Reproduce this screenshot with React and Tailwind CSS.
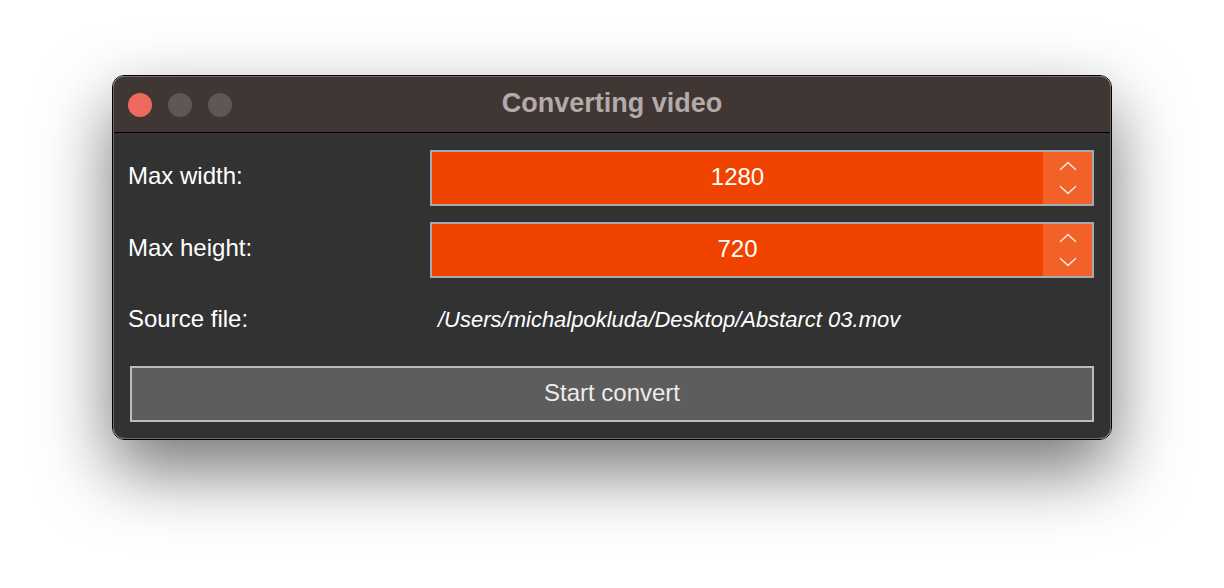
import React from "react";

function Chevron({ up }) {
  return (
    <svg width="18" height="10" viewBox="0 0 18 10" fill="none">
      <path
        d={up ? "M1.5 8.5 L9 1.5 L16.5 8.5" : "M1.5 1.5 L9 8.5 L16.5 1.5"}
        stroke="#fde9df"
        strokeWidth="1.5"
        strokeLinecap="round"
        strokeLinejoin="round"
      />
    </svg>
  );
}

function NumberField({ value }) {
  return (
    <div className="flex h-[56px] border-2 border-[#a5a8b5] bg-[#f04300]">
      <div className="flex flex-1 items-center justify-center pb-[3px] text-[24px] text-white">
        {value}
      </div>
      <div className="flex w-[49px] flex-col items-center justify-center gap-[14px] bg-[#f26128]">
        <Chevron up />
        <Chevron />
      </div>
    </div>
  );
}

export default function App() {
  return (
    <div
      className="flex h-[588px] w-[1224px] justify-center bg-white pt-[75px]"
      style={{ fontFamily: '"Liberation Sans", Arial, Helvetica, sans-serif' }}
    >
      <div className="h-[365px] w-[1000px] rounded-[12px] border border-black shadow-[0_30px_70px_rgba(0,0,0,0.55)]">
        <div className="flex h-full flex-col overflow-hidden rounded-[11px] border border-[#6e6a69] bg-[#323232]">
          <div className="relative flex h-[56px] shrink-0 items-center border-b border-black bg-[#403735] pl-[14px]">
            <div className="flex gap-[16px]">
              <div className="h-[24px] w-[24px] rounded-full bg-[#ee6a5e]" />
              <div className="h-[24px] w-[24px] rounded-full bg-[#5e5755]" />
              <div className="h-[24px] w-[24px] rounded-full bg-[#5e5755]" />
            </div>
            <div className="absolute inset-0 flex items-center justify-center pb-[2px] text-[27px] font-bold text-[#b4aaa8]">
              Converting video
            </div>
          </div>
          <div className="grid grid-cols-[302px_1fr] gap-y-[16px] pl-[14px] pr-[16px] pt-[17px]">
            <div className="flex items-center pb-[4px] text-[24px] text-white">Max width:</div>
            <NumberField value="1280" />
            <div className="flex items-center pb-[4px] text-[24px] text-white">Max height:</div>
            <NumberField value="720" />
            <div className="flex h-[56px] items-center pb-[6px] text-[24px] text-white">Source file:</div>
            <div className="flex h-[56px] items-center pb-[6px] pl-[8px] text-[22px] italic text-white">
              /Users/michalpokluda/Desktop/Abstarct 03.mov
            </div>
            <button className="col-span-2 ml-[2px] flex h-[56px] items-center justify-center border-2 border-[#bcbcbc] bg-[#5d5d5d] pb-[2px] text-[24px] text-[#ececec]">
              Start convert
            </button>
          </div>
        </div>
      </div>
    </div>
  );
}
